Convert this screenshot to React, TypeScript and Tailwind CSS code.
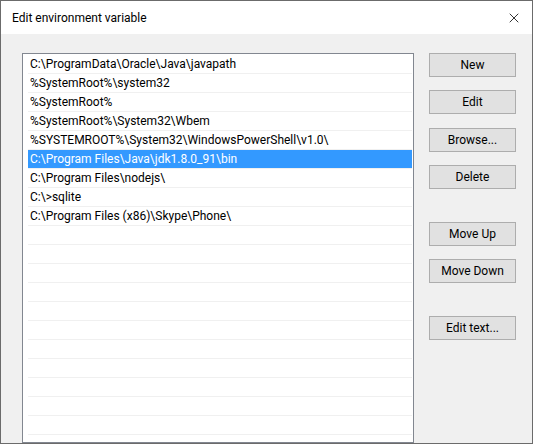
import { X } from 'lucide-react'

const paths = [
  'C:\\ProgramData\\Oracle\\Java\\javapath',
  '%SystemRoot%\\system32',
  '%SystemRoot%',
  '%SystemRoot%\\System32\\Wbem',
  '%SYSTEMROOT%\\System32\\WindowsPowerShell\\v1.0\\',
  'C:\\Program Files\\Java\\jdk1.8.0_91\\bin',
  'C:\\Program Files\\nodejs\\',
  'C:\\>sqlite',
  'C:\\Program Files (x86)\\Skype\\Phone\\',
]

const selected = 5

function WinButton({ label, className = '' }: { label: string; className?: string }) {
  return (
    <button
      className={`h-[24px] w-[87px] border border-[#adadad] bg-[#e1e1e1] text-[12px] text-black leading-none ${className}`}
    >
      {label}
    </button>
  )
}

export default function App() {
  const rows = Array.from({ length: 21 }, (_, i) => paths[i] ?? '')

  return (
    <div
      className="flex h-[444px] w-[533px] flex-col overflow-hidden border border-[#6b6b6b] bg-[#f0f0f0]"
      style={{ fontFamily: 'Roboto, "Liberation Sans", sans-serif' }}
    >
      {/* title bar */}
      <div className="flex h-[33px] shrink-0 items-center justify-between bg-white pl-[11px] pr-[10px]">
        <span className="text-[12px] text-black">Edit environment variable</span>
        <X className="h-[16px] w-[16px] text-black" strokeWidth={1.2} />
      </div>

      <div className="flex flex-1 gap-[15px] pl-[21px] pt-[19px]">
        {/* list */}
        <div className="h-[390px] w-[392px] overflow-hidden border border-[#828790] bg-white pl-[5px] pr-[1px] pt-[1px]">
          {rows.map((p, i) => (
            <div
              key={i}
              className={`flex h-[19px] items-center border-b border-[#f0f0f0] pl-[2px] text-[12px] ${
                i === selected ? 'bg-[#3399ff] text-white' : 'text-black'
              }`}
            >
              {p}
            </div>
          ))}
        </div>

        {/* buttons */}
        <div className="flex flex-col">
          <WinButton label="New" />
          <WinButton label="Edit" className="mt-[13px]" />
          <WinButton label="Browse..." className="mt-[14px]" />
          <WinButton label="Delete" className="mt-[13px]" />
          <WinButton label="Move Up" className="mt-[33px]" />
          <WinButton label="Move Down" className="mt-[13px]" />
          <WinButton label="Edit text..." className="mt-[33px]" />
        </div>
      </div>
    </div>
  )
}
